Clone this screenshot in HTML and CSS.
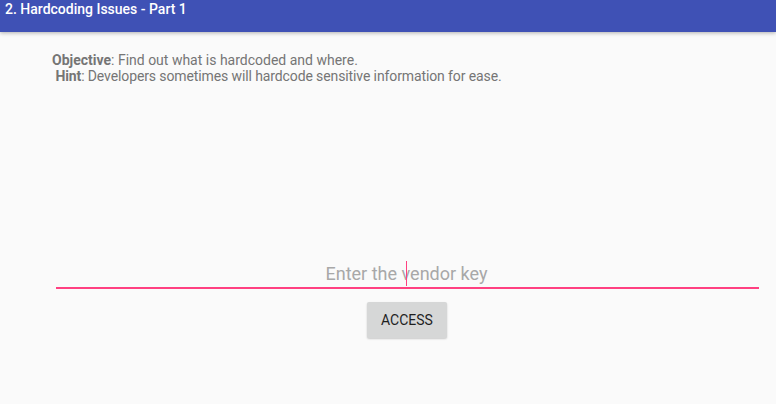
FILE: index.html
```html
<!DOCTYPE html>
<html>
<head>
<meta charset="utf-8">
<link rel="stylesheet" href="styles.css">
</head>
<body>
<header class="appbar"><span class="title">2. Hardcoding Issues - Part 1</span></header>
<main class="content">
  <div class="info">
    <div class="line"><b>Objective</b>: Find out what is hardcoded and where.</div>
    <div class="line hint">&nbsp;<b>Hint</b>: Developers sometimes will hardcode sensitive information for ease.</div>
  </div>
  <div class="field">
    <span class="placeholder">Enter the vendor key</span>
    <span class="caret"></span>
  </div>
  <div class="actions"><button class="btn">ACCESS</button></div>
</main>
</body>
</html>
```
FILE: styles.css
```css
html, body {
  margin: 0;
  padding: 0;
  width: 776px;
  height: 404px;
  background: #fafafa;
  font-family: Roboto, "Noto Sans", sans-serif;
  overflow: hidden;
}
.appbar {
  height: 32px;
  background: #3f51b5;
  box-shadow: 0 1px 4px rgba(0,0,0,0.3);
  display: flex;
  align-items: flex-start;
  padding-left: 5px;
  position: relative;
}
.title {
  color: #fff;
  font-size: 14px;
  font-weight: 500;
  line-height: 18px;
}
.content {
  display: flex;
  flex-direction: column;
}
.info {
  padding: 20px 0 0 52px;
  color: #757575;
  font-size: 14px;
  line-height: 16px;
}
.info .hint {
  letter-spacing: -0.11px;
}
.info b {
  font-weight: 700;
}
.field {
  position: relative;
  margin: 175px 17px 0 56px;
  height: 30px;
  border-bottom: 2px solid #ff4081;
  display: flex;
  justify-content: center;
  align-items: flex-end;
  box-sizing: border-box;
}
.placeholder {
  color: #a8a8a8;
  font-size: 18px;
  line-height: 24px;
  padding-bottom: 1px;
  margin-left: -2px;
}
.caret {
  position: absolute;
  left: 350px;
  top: 2px;
  width: 1px;
  height: 25px;
  background: #ff4081;
}
.actions {
  display: flex;
  justify-content: center;
  padding-top: 13px;
  padding-left: 38px;
}
.btn {
  width: 80px;
  height: 36px;
  background: #d6d7d7;
  border: none;
  border-radius: 2px;
  box-shadow: 0 1px 2px rgba(0,0,0,0.2);
  color: #1f1f1f;
  font-family: Roboto, sans-serif;
  font-size: 14px;
  font-weight: 400;
  padding: 0;
}
```
